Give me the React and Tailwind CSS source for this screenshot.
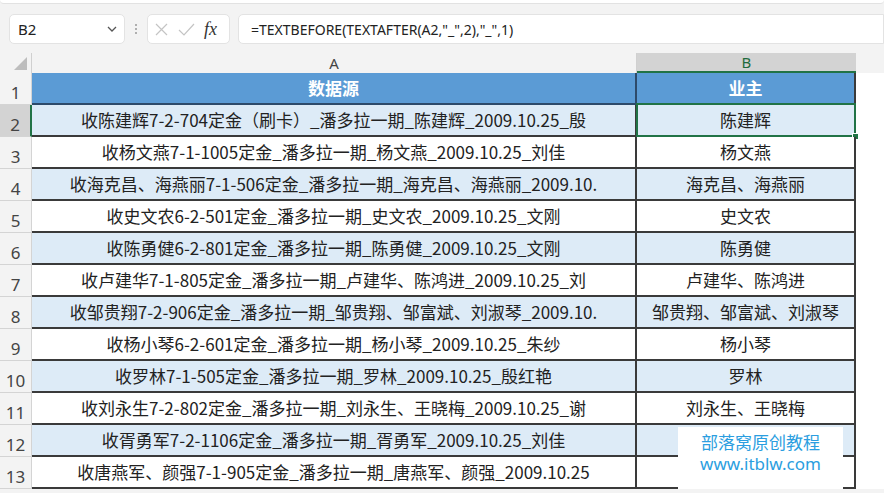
import React from 'react';

const rows = [
  ['收陈建辉7-2-704定金（刷卡）_潘多拉一期_陈建辉_2009.10.25_殷', '陈建辉'],
  ['收杨文燕7-1-1005定金_潘多拉一期_杨文燕_2009.10.25_刘佳', '杨文燕'],
  ['收海克昌、海燕丽7-1-506定金_潘多拉一期_海克昌、海燕丽_2009.10.', '海克昌、海燕丽'],
  ['收史文农6-2-501定金_潘多拉一期_史文农_2009.10.25_文刚', '史文农'],
  ['收陈勇健6-2-801定金_潘多拉一期_陈勇健_2009.10.25_文刚', '陈勇健'],
  ['收卢建华7-1-805定金_潘多拉一期_卢建华、陈鸿进_2009.10.25_刘', '卢建华、陈鸿进'],
  ['收邹贵翔7-2-906定金_潘多拉一期_邹贵翔、邹富斌、刘淑琴_2009.10.', '邹贵翔、邹富斌、刘淑琴'],
  ['收杨小琴6-2-601定金_潘多拉一期_杨小琴_2009.10.25_朱纱', '杨小琴'],
  ['收罗林7-1-505定金_潘多拉一期_罗林_2009.10.25_殷红艳', '罗林'],
  ['收刘永生7-2-802定金_潘多拉一期_刘永生、王晓梅_2009.10.25_谢', '刘永生、王晓梅'],
  // B12 / B13 are hidden under the watermark box
  ['收胥勇军7-2-1106定金_潘多拉一期_胥勇军_2009.10.25_刘佳', ''],
  ['收唐燕军、颜强7-1-905定金_潘多拉一期_唐燕军、颜强_2009.10.25', ''],
];

const cjk = { fontFamily: '"Noto Sans CJK SC", "Noto Sans", sans-serif' };
const ui = { fontFamily: '"Noto Sans", "Open Sans", sans-serif' };

export default function App() {
  return (
    <div className="w-[884px] h-[493px] overflow-hidden bg-[#f3f3f3] relative">
      {/* formula bar */}
      <div className="h-[53px] relative">
        <div className="h-[4px] bg-white rounded-b-md border-b border-[#e2e2e2]" />
        <div className="flex items-center pt-[10px] pl-[9px] gap-[8px]">
          <div className="w-[116px] h-[30px] bg-white border border-[#e3e3e3] rounded-[5px] flex items-center justify-between pl-[8px] pr-[6px] text-[15px] text-[#222]" style={ui}>
            <span>B2</span>
            <svg width="12" height="12" viewBox="0 0 12 12"><path d="M2 4l4 4 4-4" fill="none" stroke="#555" strokeWidth="1.3" /></svg>
          </div>
          <div className="flex flex-col gap-[2px] px-[2px]">
            <span className="w-[2px] h-[2px] bg-[#999] rounded-full" />
            <span className="w-[2px] h-[2px] bg-[#999] rounded-full" />
            <span className="w-[2px] h-[2px] bg-[#999] rounded-full" />
          </div>
          <div className="w-[83px] h-[30px] bg-white border border-[#e3e3e3] rounded-[5px] flex items-center pl-[6px] gap-[9px]">
            <svg width="15" height="15" viewBox="0 0 15 15"><path d="M2 2l11 11M13 2L2 13" stroke="#c4c4c4" strokeWidth="1.2" /></svg>
            <svg width="17" height="15" viewBox="0 0 17 15"><path d="M1 8l5 5L16 2" fill="none" stroke="#c4c4c4" strokeWidth="1.2" /></svg>
            <span className="italic text-[18px] text-[#333] leading-none" style={{ fontFamily: '"Liberation Serif", serif' }}>fx</span>
          </div>
          <div className="flex-1 h-[30px] bg-white border border-[#e3e3e3] rounded-l-[5px] flex items-center pl-[12px] text-[14px] text-[#222]" style={ui}>
            =TEXTBEFORE(TEXTAFTER(A2,"_",2),"_",1)
          </div>
        </div>
      </div>

      {/* column headers */}
      <div className="grid grid-cols-[32px_605px_219px_1fr] h-[20px] text-[15px] text-[#444]" style={ui}>
        <div className="border-r border-[#d0d0d0] relative">
          <svg className="absolute right-[4px] bottom-[3px]" width="13" height="13" viewBox="0 0 13 13"><path d="M13 0V13H0Z" fill="#bdbdbd" /></svg>
        </div>
        <div className="flex items-center justify-center border-r border-[#d0d0d0] leading-none">A</div>
        <div className="flex items-center justify-center bg-[#d3d3d3] text-[#1f6b3d] border-b-2 border-[#217346] leading-none">B</div>
        <div className="bg-[#f3f3f3]" />
      </div>

      {/* rows */}
      <div className="bg-white">
        <div className="grid grid-cols-[32px_605px_219px_1fr] h-[32px]">
          <div className="bg-[#f3f3f3] border-r border-b border-[#d4d4d4] flex items-end justify-center text-[17px] text-[#444] leading-[22px]" style={ui}>1</div>
          <div className="bg-[#5b9bd5] border-b-2 border-[#2d4a6a] border-r-2 border-r-[#2d4a6a] flex items-center justify-center text-white font-bold text-[17px]" style={cjk}>数据源</div>
          <div className="bg-[#5b9bd5] border-b-2 border-[#2d4a6a] border-r-2 border-r-[#3a3a3a] flex items-center justify-center text-white font-bold text-[17px]" style={cjk}>业主</div>
          <div className="bg-white" />
        </div>
        {rows.map((r, i) => {
          const n = i + 2;
          const shade = n % 2 === 0 ? 'bg-[#ddebf7]' : 'bg-white';
          const sel = n === 2;
          return (
            <div key={n} className="grid grid-cols-[32px_605px_219px_1fr] h-[32px]">
              <div className={`${sel ? 'bg-[#d3d3d3] border-r-2 border-r-[#217346]' : 'bg-[#f3f3f3] border-r border-r-[#d4d4d4]'} border-b border-[#d4d4d4] flex items-end justify-center text-[17px] text-[#444] leading-[22px]`} style={ui}>{n}</div>
              <div className={`${shade} border-b-2 border-[#3a3a3a] border-r-2 border-r-[#3a3a3a] flex items-center justify-center overflow-hidden whitespace-nowrap text-[17px] text-[#222]`} style={cjk}>{r[0]}</div>
              <div className={`${shade} border-b-2 border-[#3a3a3a] border-r-2 border-r-[#3a3a3a] flex items-center justify-center overflow-visible whitespace-nowrap text-[17px] text-[#222] relative`} style={cjk}>
                {r[1]}
                {sel && (
                  <>
                    <div className="absolute inset-[-2px_-2px_-2px_-1px] border-2 border-[#217346]" />
                    <div className="absolute right-[-5px] bottom-[-5px] w-[7px] h-[7px] bg-[#217346] border border-white" />
                  </>
                )}
              </div>
              <div className="bg-white" />
            </div>
          );
        })}
      </div>

      {/* watermark */}
      <div className="absolute left-[678px] top-[427px] w-[165px] h-[62px] bg-white flex flex-col items-center pt-[4px] text-[#2b9ee0] text-[17px] leading-[22px]" style={cjk}>
        <span>部落窝原创教程</span>
        <span style={ui}>www.itblw.com</span>
      </div>
    </div>
  );
}
